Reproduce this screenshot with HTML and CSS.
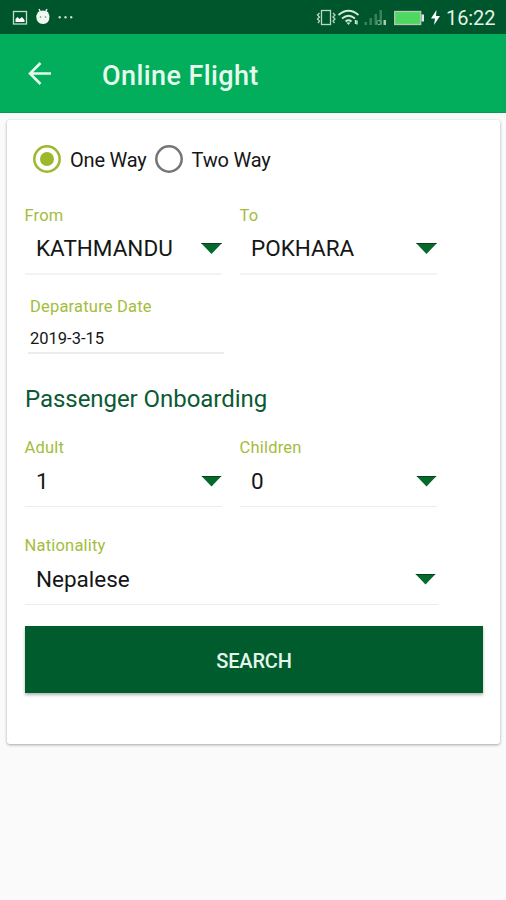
FILE: index.html
```
<!DOCTYPE html>
<html lang="en">
<head>
<meta charset="utf-8">
<title>Online Flight</title>
<link rel="stylesheet" href="styles.css">
</head>
<body>
<header class="status">
  <svg class="status-left" width="80" height="34" viewBox="0 0 80 34">
    <rect x="13.5" y="11.5" width="13" height="12.500" fill="none" stroke="#c4dccb" stroke-width="1.3"/>
    <path d="M15.500 22v-3l2-2 2 2 2.500-2 2.500 3v2z" fill="#fff"/>
    <path d="M39 9l2 4M47 9l-2 4" stroke="#e9f5ec" stroke-width="1.4"/>
    <path d="M38 12q5-3 10 0l1.500 4q0 8-6.500 8t-6.800-8z" fill="#f0f8f2"/>
    <circle cx="40.500" cy="17" r=".8" fill="#4b8e67"/><circle cx="45.500" cy="17" r=".8" fill="#4b8e67"/>
    <circle cx="59.700" cy="17.300" r="1.200" fill="#c4dccb"/><circle cx="65.500" cy="17.300" r="1.200" fill="#c4dccb"/><circle cx="71.200" cy="17.300" r="1.200" fill="#c4dccb"/>
  </svg>
  <svg class="status-right" width="130" height="34" viewBox="314 0 130 34">
    <g fill="none" stroke="#bcd8c4" stroke-width="1.300">
      <rect x="321.500" y="10.500" width="9" height="14"/>
      <path d="M319.500 13l-2 2 2 2-2 2 2 2-1.500 2M333 13l2 2-2 2 2 2-2 2 1.500 2"/>
    </g>
    <g fill="none" stroke="#d6eadc" stroke-width="1.700">
      <path d="M338.500 15q10-8.500 20 0M342 18.500q6.500-5.500 13 0M345.500 21.500q3-2.500 6 0"/>
    </g>
    <path d="M346.500 22.500h4l-2 2.500z" fill="#d6eadc"/>
    <path d="M355.500 20v4M357 20.500v4" stroke="#d6eadc" stroke-width="1.300"/>
    <g fill="#3a8259"><rect x="364.500" y="22" width="2.500" height="3"/><rect x="369.500" y="18" width="2.500" height="7"/><rect x="374.500" y="14" width="2.500" height="11"/><rect x="379.500" y="10" width="2.500" height="15"/><rect x="383.500" y="20" width="2.500" height="5" fill="#a8cdb5"/></g>
    <circle cx="379" cy="22.500" r="2.200" fill="none" stroke="#79ab8d" stroke-width="1"/>
    <rect x="394.700" y="11.500" width="26" height="13" fill="#4fd860" stroke="#b5c8bc" stroke-width="1.300"/>
    <rect x="421.500" y="14.500" width="2.500" height="7" fill="#dcebe0"/>
    <path d="M436.500 10l-5.500 8.500h4l-1 6.500 6-9h-4z" fill="#fff"/>
  </svg>
  <span class="clock">16:22</span>
</header>
<nav class="bar">
  <svg class="back" width="24" height="24" viewBox="0 0 24 24"><path d="M23 12.500H2.500M12.500 2L2 12.500l10.500 10.500" fill="none" stroke="#e6faee" stroke-width="2.600"/></svg>
  <h1 class="title">Online Flight</h1>
</nav>
<main class="card">
  <div class="radios">
    <svg width="28" height="28" viewBox="0 0 28 28"><circle cx="14" cy="14" r="12.700" fill="none" stroke="#9cb82c" stroke-width="2.500"/><circle cx="14" cy="14" r="7" fill="#9cb82c"/></svg>
    <span class="radio-text first">One Way</span>
    <svg width="28" height="28" viewBox="0 0 28 28"><circle cx="14" cy="14" r="12.700" fill="none" stroke="#757575" stroke-width="2.500"/></svg>
    <span class="radio-text">Two Way</span>
  </div>
  <div class="pair">
    <div class="field"><div class="label">From</div><div class="value"><span>KATHMANDU</span><i class="caret"></i></div></div>
    <div class="field"><div class="label">To</div><div class="value"><span>POKHARA</span><i class="caret"></i></div></div>
  </div>
  <div class="date">
    <div class="label">Deparature Date</div>
    <div class="date-value">2019-3-15</div>
  </div>
  <h2 class="section">Passenger Onboarding</h2>
  <div class="pair light">
    <div class="field"><div class="label">Adult</div><div class="value"><span>1</span><i class="caret"></i></div></div>
    <div class="field"><div class="label">Children</div><div class="value"><span>0</span><i class="caret"></i></div></div>
  </div>
  <div class="field wide"><div class="label">Nationality</div><div class="value"><span>Nepalese</span><i class="caret"></i></div></div>
  <button class="search">SEARCH</button>
</main>
</body>
</html>
```
FILE: styles.css
```
* { box-sizing: border-box; }
body {
  margin: 0;
  height: 900px;
  background: #fafafa;
  font-family: Roboto, "Liberation Sans", sans-serif;
  color: #161616;
}
.status {
  height: 34px;
  display: flex;
  background: #00562c;
}
.status-right { margin-left: 234px; }
.clock {
  margin-left: 2px;
  line-height: 37px;
  font-size: 20px;
  letter-spacing: -.1px;
  color: #e4f3e9;
}
.bar {
  height: 79px;
  display: flex;
  align-items: center;
  background: #02ae5c;
  border-bottom: 1px solid #079a50;
}
.back { margin-left: 28px; }
.title {
  margin: 6px 0 0 50px;
  font-size: 27px;
  font-weight: 500;
  line-height: 32px;
  letter-spacing: .4px;
  color: #e6faee;
}
.card {
  width: 493px;
  height: 624px;
  margin: 7px 0 0 7px;
  padding: 25px 17px 0 18px;
  background: #fff;
  border-radius: 3px;
  box-shadow: 0 1px 3px rgba(0, 0, 0, .35);
}
.radios {
  height: 28px;
  padding-left: 8px;
  display: flex;
  align-items: center;
}
.radio-text {
  margin-left: 9px;
  font-size: 20px;
  line-height: 28px;
  padding-top: 2px;
  letter-spacing: -.2px;
}
.first { width: 84.500px; }
.pair {
  display: grid;
  grid-template-columns: 197px 197px;
  column-gap: 18px;
  margin-top: 32px;
}
.label {
  height: 20px;
  font-size: 16.500px;
  line-height: 21px;
  letter-spacing: .2px;
  margin-left: -.5px;
  color: #a3bd3c;
}
.date .label { margin-left: 0; }
.value {
  height: 50px;
  padding: 0 0 2px 11px;
  display: flex;
  align-items: center;
  justify-content: space-between;
  font-size: 22.500px;
  border-bottom: 2px solid #f3f3f3;
}
.light .value, .wide .value {
  padding-bottom: 2px;
  border-bottom: 1px solid #ececec;
}
.caret {
  width: 21px;
  height: 11px;
  margin-top: 1px;
  background: #046a2c;
  border-top: 1px solid #103c20;
  clip-path: polygon(0 0, 100% 0, 50% 100%);
}
.date {
  width: 196px;
  margin: 21px 0 0 3px;
  padding-left: 2px;
  border-bottom: 2px solid #ececec;
}
.date-value {
  height: 36px;
  font-size: 16.500px;
  line-height: 45px;
}
.section {
  margin: 30px 0 0;
  font-size: 24px;
  font-weight: 400;
  line-height: 30px;
  letter-spacing: -.05px;
  color: #0b5a34;
}
.light { margin-top: 23px; }
.wide {
  width: 413px;
  margin-top: 28px;
}
.wide .caret { margin-right: 2px; }
.search {
  display: block;
  width: 458px;
  height: 67px;
  margin-top: 21px;
  padding: 3px 0 0;
  border: 0;
  background: #015c2d;
  box-shadow: 0 2px 3px rgba(0, 0, 0, .3);
  font: 500 20px Roboto, sans-serif;
  letter-spacing: -.2px;
  color: #e4f6ea;
}
```
